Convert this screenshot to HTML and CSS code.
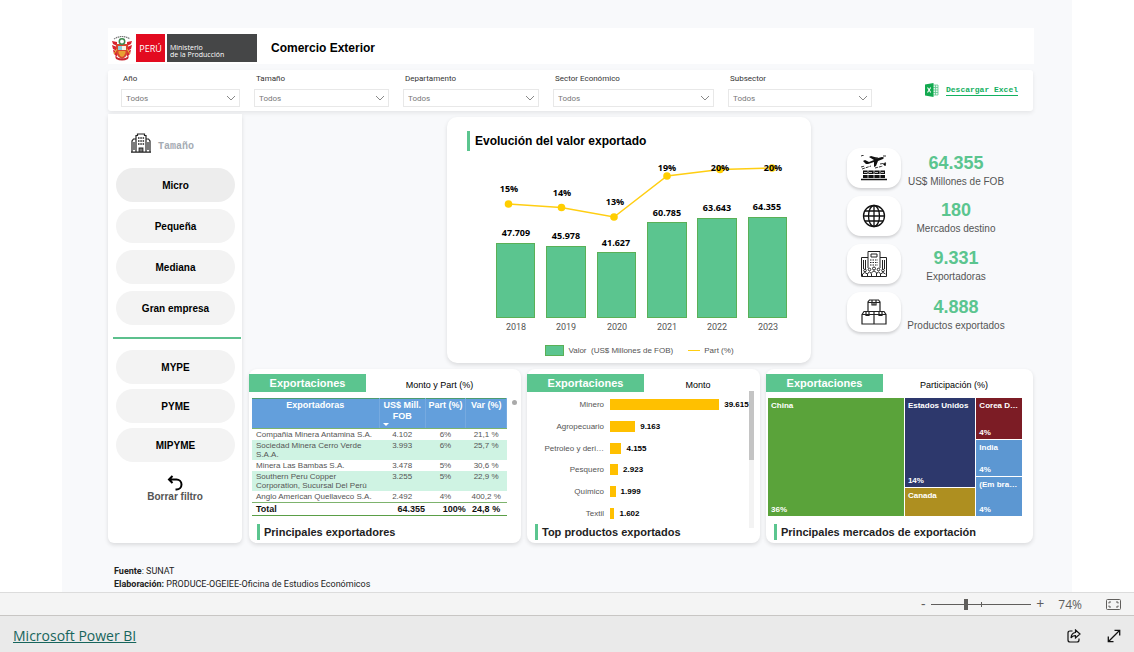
FILE: index.html
```html
<!DOCTYPE html>
<html lang="es">
<head>
<meta charset="utf-8">
<meta name="viewport" content="width=device-width, initial-scale=1">
<title>Comercio Exterior</title>
<link rel="stylesheet" href="styles.css">
</head>
<body>
<main class="report">
  <header class="topbar">
    <svg class="crest" viewBox="0 0 20 26" aria-hidden="true">
      <path d="M2 4Q10-1 18 4" fill="none" stroke="#777" stroke-width="1.2" stroke-dasharray="1.5 .6"/>
      <path d="M0 6l5 1v4l-4-2zM20 6l-5 1v4l4-2zM0 10l5 2v4l-4-2zM20 10l-5 2v4l4-2zM1 15l4 1v6l-3-3zM19 15l-4 1v6l3-3z" fill="#d8232f"/>
      <path d="M4 9h12v7q0 5-6 8-6-3-6-8z" fill="#d9452f"/>
      <path d="M6 11h4v4H6z" fill="#8fd0dc"/><path d="M10 11h4v4h-4z" fill="#f5f2e4"/>
      <path d="M6.500 16h7v2q-1 3-3.500 4-2.500-1-3.500-4z" fill="#e8a032"/>
      <circle cx="10" cy="6.500" r="2.700" fill="#fff" stroke="#3c8a4e" stroke-width="1.500"/>
      <path d="M3 21q7 5 14 0l-1 3q-6 3-12 0z" fill="#c9252f"/>
      <path d="M5 14l-3 5M15 14l3 5" stroke="#e9b52d"/>
    </svg>
    <div class="brand"><span class="brand-country">PERÚ</span><span class="brand-office">Ministerio<br>de la Producción</span></div>
    <h1>Comercio Exterior</h1>
  </header>

  <form class="filters">
    <div class="field"><label for="f1">Año</label><div class="pick"><select id="f1"><option>Todos</option></select><svg viewBox="0 0 10 6"><path d="M1 1l4 4 4-4"/></svg></div></div>
    <div class="field"><label for="f2">Tamaño</label><div class="pick"><select id="f2"><option>Todos</option></select><svg viewBox="0 0 10 6"><path d="M1 1l4 4 4-4"/></svg></div></div>
    <div class="field"><label for="f3">Departamento</label><div class="pick"><select id="f3"><option>Todos</option></select><svg viewBox="0 0 10 6"><path d="M1 1l4 4 4-4"/></svg></div></div>
    <div class="field"><label for="f4">Sector Económico</label><div class="pick"><select id="f4"><option>Todos</option></select><svg viewBox="0 0 10 6"><path d="M1 1l4 4 4-4"/></svg></div></div>
    <div class="field"><label for="f5">Subsector</label><div class="pick"><select id="f5"><option>Todos</option></select><svg viewBox="0 0 10 6"><path d="M1 1l4 4 4-4"/></svg></div></div>
    <a class="download" href="#excel">
      <svg viewBox="0 0 14 14" aria-hidden="true">
        <path d="M8 2h5v10H8" fill="#e8f6ee" stroke="#5fc78d" stroke-width=".8"/>
        <path d="M8 4.500h5M8 7h5M8 9.500h5M10.500 2v10" stroke="#5fc78d" stroke-width=".8"/>
        <path d="M0 1.500L8.500 0v14L0 12.500z" fill="#12a94f"/>
        <path d="M2.500 4.500l3.200 5M5.700 4.500l-3.200 5" stroke="#fff" stroke-width="1.100"/>
      </svg>
      <span>Descargar Excel</span>
    </a>
  </form>

  <div class="board">
    <aside class="sidebar">
      <div class="side-title">
        <svg viewBox="0 0 20 20" aria-hidden="true" fill="none" stroke="#222" stroke-width="1.200">
          <path d="M0 19.200h20M5 19V2.500h1.500V1h7v1.500H15V19M5 6H2.500L1 8v11M15 6h2.500L19 8v11M8.200 19v-4h3.600v4M10 15v4M3 9v8M17 9v8"/>
          <path d="M7 5h1.500M9.300 5h1.500M11.600 5h1.500M7 8h1.500M9.300 8h1.500M11.600 8h1.500M7 11h1.500M9.300 11h1.500M11.600 11h1.500" stroke-width="1.500"/>
        </svg>
        <span>Tamaño</span>
      </div>
      <div class="pills pills-size">
        <button class="pill pill-active" type="button">Micro</button>
        <button class="pill" type="button">Pequeña</button>
        <button class="pill" type="button">Mediana</button>
        <button class="pill" type="button">Gran empresa</button>
      </div>
      <hr class="rule">
      <div class="pills pills-group">
        <button class="pill" type="button">MYPE</button>
        <button class="pill" type="button">PYME</button>
        <button class="pill" type="button">MIPYME</button>
      </div>
      <button class="clear" type="button">
        <svg viewBox="0 0 16 16" aria-hidden="true" fill="none" stroke="#000" stroke-width="2"><path d="M5.500 1L2 4.500 5.500 8M2 4.500h7.500a5 5 0 0 1 0 10H8.500"/></svg>
        <span>Borrar filtro</span>
      </button>
    </aside>

    <div class="content">
      <div class="upper">
        <section class="card evolution">
          <h2 class="marked">Evolución del valor exportado</h2>
          <svg class="plot" viewBox="0 0 364 180" role="img" aria-label="Evolución del valor exportado">
            <g class="cols">
              <rect x="49.500" y="88.500" width="38" height="74"/><rect x="99.500" y="91.500" width="39" height="71"/>
              <rect x="150.500" y="97.500" width="38" height="65"/><rect x="200.500" y="67.500" width="39" height="95"/>
              <rect x="250.500" y="63.500" width="39" height="99"/><rect x="301.500" y="62.500" width="38" height="100"/>
            </g>
            <path class="trend" d="M61.500 49L114 52.500 167 62 220 21 273 14.500 326 13"/>
            <g class="dots"><circle cx="61.500" cy="49" r="3.800"/><circle cx="114.500" cy="52.500" r="3.800"/><circle cx="167" cy="62" r="3.800"/><circle cx="220" cy="21" r="3.800"/><circle cx="273" cy="14.500" r="3.800"/><circle cx="325" cy="13" r="3.800"/></g>
            <g class="vals">
              <text x="62" y="37">15%</text><text x="115" y="41">14%</text><text x="168" y="50">13%</text><text x="220" y="16">19%</text><text x="273" y="16">20%</text><text x="326" y="16">20%</text>
              <text x="69" y="81">47.709</text><text x="119" y="84">45.978</text><text x="169" y="91">41.627</text><text x="220" y="61">60.785</text><text x="270" y="56">63.643</text><text x="320" y="55">64.355</text>
            </g>
            <g class="years"><text x="69" y="175">2018</text><text x="119" y="175">2019</text><text x="170" y="175">2020</text><text x="220" y="175">2021</text><text x="270" y="175">2022</text><text x="321" y="175">2023</text></g>
          </svg>
          <div class="legend"><span class="key key-bar">Valor &nbsp;(US$ Millones de FOB)</span><span class="key key-line">Part (%)</span></div>
        </section>

        <div class="kpis">
          <div class="kpi kpi-low">
            <div class="tile"><svg viewBox="0 0 26 26" aria-hidden="true">
              <path d="M2 6l2-1 4 2 5-2-5-3 2-1 7 2 4-1q3 0 1 2l-5 2-2 5-2 1V7l-6 2H5z" fill="#111"/>
              <path d="M0 12l4-1M14 3h3M19 9l6-1M0 1l3-1M22 1h3M1 14l9-3M14 13l8-2M22 9l3-1-1 3" stroke="#333" stroke-width="1" stroke-dasharray="3 1"/>
              <path d="M2 15.500h22v3.500H2zM2 20h22v3H2z" fill="#111"/>
              <path d="M3 17.500h3M8 17.500h3M14 17.500h3M20 17.500h3M7 15v9M13 15v9M19 15v9" stroke="#fff" stroke-width=".7"/>
              <path d="M0 24.500h26" stroke="#111" stroke-width="1.500"/>
            </svg></div>
            <div class="figure"><strong>64.355</strong><span>US$ Millones de FOB</span></div>
          </div>
          <div class="kpi">
            <div class="tile"><svg viewBox="0 0 26 26" aria-hidden="true" fill="none" stroke="#111" stroke-width="1.300">
              <circle cx="13" cy="13" r="10.500"/><ellipse cx="13" cy="13" rx="5.500" ry="10.500"/><path d="M13 2.500v21M2.500 13h21M4 8h18M4 18h18"/>
            </svg></div>
            <div class="figure"><strong>180</strong><span>Mercados destino</span></div>
          </div>
          <div class="kpi">
            <div class="tile"><svg viewBox="0 0 26 26" aria-hidden="true" fill="none" stroke="#222" stroke-width="1">
              <path d="M7 17V.5h12V17M7 6.500H.5v19h25v-19H19M10 3h6v3h-6zM2.500 9v9M4.500 9v9M21.500 9v9M23.500 9v9"/>
              <path d="M9 9h8M9 11.500h8M9 14h8" stroke-dasharray="1.500 1"/>
              <circle cx="4" cy="19.500" r="1.300"/><circle cx="8.500" cy="18.500" r="1.300"/><circle cx="13" cy="17.500" r="1.500"/><circle cx="17.500" cy="18.500" r="1.300"/><circle cx="22" cy="19.500" r="1.300"/>
              <path d="M1.500 25v-2q2-3 5 0v2M6.500 23q2-4 4 0v2M10.500 22q2.500-4 5 0v3M15.500 23q2-4 4 0v2M19.500 23q2.500-3 5 0"/>
            </svg></div>
            <div class="figure"><strong>9.331</strong><span>Exportadoras</span></div>
          </div>
          <div class="kpi kpi-low">
            <div class="tile"><svg viewBox="0 0 26 26" aria-hidden="true" fill="none" stroke="#222" stroke-width="1.200">
              <path d="M7 13V3l1.500-2h9L19 3v10M7 3.500h12M11 1v5h4V1M13 3v3M1 15.500L3 12.500h20l2 3V25H1zM1 15.500h24M13 13v12M5 12.500v4h3v-4M18 12.500v4h3v-4"/>
            </svg></div>
            <div class="figure"><strong>4.888</strong><span>Productos exportados</span></div>
          </div>
        </div>
      </div>

      <div class="lower">
        <section class="card panel">
          <div class="panel-head"><span class="tab">Exportaciones</span><span class="sub">Monto y Part (%)</span></div>
          <div class="panel-body table-body">
            <table>
              <colgroup><col class="c-name"><col class="c-amount"><col class="c-part"><col class="c-var"></colgroup>
              <thead><tr><th>Exportadoras</th><th>US$ Mill. FOB<i class="sort"></i></th><th>Part (%)</th><th>Var (%)</th></tr></thead>
              <tbody>
                <tr><td>Compañia Minera Antamina S.A.</td><td>4.102</td><td>6%</td><td>21,1 %</td></tr>
                <tr><td>Sociedad Minera Cerro Verde S.A.A.</td><td>3.993</td><td>6%</td><td>25,7 %</td></tr>
                <tr><td>Minera Las Bambas S.A.</td><td>3.478</td><td>5%</td><td>30,6 %</td></tr>
                <tr><td>Southern Peru Copper Corporation, Sucursal Del Perú</td><td>3.255</td><td>5%</td><td>22,9 %</td></tr>
                <tr><td>Anglo American Quellaveco S.A.</td><td>2.492</td><td>4%</td><td>400,2 %</td></tr>
              </tbody>
              <tfoot><tr><td>Total</td><td>64.355</td><td>100%</td><td>24,8 %</td></tr></tfoot>
            </table>
            <i class="scroll-dot"></i>
          </div>
          <h2 class="marked">Principales exportadores</h2>
        </section>

        <section class="card panel">
          <div class="panel-head"><span class="tab">Exportaciones</span><span class="sub">Monto</span></div>
          <div class="panel-body bars">
            <div class="bar-row"><span>Minero</span><div><i style="width:78%"></i><b>39.615</b></div></div>
            <div class="bar-row"><span>Agropecuario</span><div><i style="width:18%"></i><b>9.163</b></div></div>
            <div class="bar-row"><span>Petroleo y deri…</span><div><i style="width:8.2%"></i><b>4.155</b></div></div>
            <div class="bar-row"><span>Pesquero</span><div><i style="width:5.8%"></i><b>2.923</b></div></div>
            <div class="bar-row"><span>Químico</span><div><i style="width:4%"></i><b>1.999</b></div></div>
            <div class="bar-row"><span>Textil</span><div><i style="width:3.2%"></i><b>1.602</b></div></div>
          </div>
          <div class="scrollbar"><i></i></div>
          <h2 class="marked">Top productos exportados</h2>
        </section>

        <section class="card panel">
          <div class="panel-head"><span class="tab">Exportaciones</span><span class="sub">Participación (%)</span></div>
          <div class="panel-body treemap">
            <div class="node china"><b>China</b><span>36%</span></div>
            <div class="node usa"><b>Estados Unidos</b><span>14%</span></div>
            <div class="node canada"><b>Canada</b></div>
            <div class="node korea"><b>Corea D…</b><span>4%</span></div>
            <div class="node india"><b>India</b><span>4%</span></div>
            <div class="node blank"><b>(Em bra…</b><span>4%</span></div>
          </div>
          <h2 class="marked">Principales mercados de exportación</h2>
        </section>
      </div>
    </div>
  </div>

  <p class="source"><b>Fuente</b>: SUNAT<br><b>Elaboración:</b> PRODUCE-OGEIEE-Oficina de Estudios Económicos</p>
</main>

<div class="zoombar">
  <button class="step" type="button" aria-label="Alejar">-</button>
  <div class="slider"><input type="range" min="0" max="100" value="34" aria-label="Zoom"></div>
  <button class="step" type="button" aria-label="Acercar">+</button>
  <span class="percent">74%</span>
  <button class="icon-btn" type="button" aria-label="Ajustar a la página"><svg viewBox="0 0 15 11" width="15" height="11" fill="none" stroke="#605e5c"><rect x=".5" y=".5" width="14" height="10" rx="1"/><path d="M3 4.500V3h2M10 3h2v1.500M12 6.500V8h-2M5 8H3V6.500"/></svg></button>
</div>
<footer class="footer">
  <a href="#powerbi">Microsoft Power BI</a>
  <div class="actions">
    <button class="icon-btn" type="button" aria-label="Compartir"><svg viewBox="0 0 14 14" width="14" height="14" fill="none" stroke="#111" stroke-width="1.200"><path d="M5.500 2H3Q1 2 1 4v7q0 2 2 2h7q2 0 2-2V9.500"/><path d="M8.500 1l4.500 4-4.500 4V6.700Q5.500 6.500 4 9q.3-5 4.500-5.500z"/></svg></button>
    <button class="icon-btn" type="button" aria-label="Pantalla completa"><svg viewBox="0 0 14 14" width="14" height="14" fill="none" stroke="#111" stroke-width="1.300"><path d="M1.500 12.500l11-11M7.500 1.300h5.200v5.200M1.300 7.500v5.200h5.200"/></svg></button>
  </div>
</footer>
</body>
</html>
```
FILE: styles.css
```css
* { box-sizing: border-box; }
body {
  margin: 0;
  min-height: 100vh;
  display: flex;
  flex-direction: column;
  background: #fff;
  color: #000;
  font-family: "Liberation Sans", Arial, sans-serif;
  font-size: 10px;
}
button { border: 0; padding: 0; background: none; font: inherit; color: inherit; cursor: pointer; }
h1, h2, p { margin: 0; }

.report {
  flex: 1;
  margin: 0 62px;
  padding: 28px 38px 0 46px;
  background: #f8f9fb;
}
.topbar {
  display: flex;
  align-items: center;
  height: 36px;
  padding: 0 4px;
  background: #fff;
}
.topbar h1 { margin-left: 14px; padding-top: 3px; font-size: 12px; line-height: 16px; }
.crest { width: 20px; height: 26px; margin: 4px 4px 0 0; }
.brand { display: flex; gap: 2px; height: 28px; margin-top: 4px; color: #fff; font-family: "Open Sans", sans-serif; }
.brand-country { display: flex; align-items: center; justify-content: center; width: 29px; background: #e30b20; font-size: 9px; }
.brand-office {
  display: flex;
  flex-direction: column;
  justify-content: center;
  width: 90px;
  padding: 6px 3px 0;
  background: #454647;
  font-size: 7px;
  line-height: 7px;
}

.filters {
  display: grid;
  grid-template-columns: 119fr 135fr 136fr 161fr 144fr 147fr;
  gap: 14px;
  margin-top: 6px;
  margin-right: 1px;
  padding: 3px 0 4px 13px;
  background: #fff;
  border-radius: 3px;
  box-shadow: 0 2px 4px rgba(0, 0, 0, .08);
  color: #444;
  font-family: Roboto, sans-serif;
  font-size: 8px;
}
.field label { display: block; padding: 0 2px; line-height: 12px; margin-bottom: 4px; color: #333; }
.pick { display: grid; align-items: center; }
.pick > * { grid-area: 1 / 1; }
.pick select {
  appearance: none;
  width: 100%;
  height: 18px;
  padding: 0 4px;
  border: 1px solid #e8e8e8;
  border-radius: 0;
  background: #fff;
  color: #777;
  font: inherit;
}
.pick svg { justify-self: end; width: 10px; height: 6px; margin-right: 4px; fill: none; stroke: #888; pointer-events: none; }
.download {
  display: flex;
  align-items: center;
  justify-self: end;
  gap: 7px;
  margin-right: 15px;
  color: #12b060;
  font: bold 8px/10px "Liberation Mono", "Courier New", monospace;
  text-decoration: none;
  white-space: nowrap;
}
.download svg { width: 14px; height: 14px; }
.download span { border-bottom: 1px solid #12b060; }

.board { display: grid; grid-template-columns: 134px minmax(0, 1fr); gap: 7px; margin-top: 3px; margin-right: 1px; }
.card, .sidebar { background: #fff; box-shadow: 0 2px 4px rgba(0, 0, 0, .12); }
.sidebar { padding: 18px 1px 0 5px; border-radius: 0 0 6px 6px; }
.side-title { display: flex; align-items: flex-end; gap: 7px; height: 22px; padding-left: 18px; color: #a5abb3; font: bold 10px/14px "Liberation Mono", "Courier New", monospace; }
.side-title svg { width: 20px; height: 20px; margin-bottom: 1px; }
.pills { display: flex; flex-direction: column; padding: 0 6px 0 3px; }
.pills-size { gap: 7px; margin-top: 14px; }
.pills-group { gap: 5px; }
.pill { height: 34px; border-radius: 17px; background: #f3f3f3; font-size: 10px; font-weight: bold; }
.pill-active { background: #ededed; }
.rule { height: 2px; margin: 12px 0 11px; border: 0; background: #5cc08d; }
.clear { display: flex; flex-direction: column; align-items: center; width: 120px; margin: 13px 0 0 2px; color: #555; font-weight: bold; line-height: 12px; }
.clear svg { width: 16px; height: 16px; }

.content { padding-top: 3px; }
.upper { display: grid; grid-template-columns: 198fr 364fr 222fr; }
.evolution { grid-column: 2; padding: 14px 0 7px; border-radius: 10px; }
.marked { border-left: 3px solid #5bc58f; }
.evolution .marked { margin-left: 20px; padding-left: 5px; font-size: 12px; line-height: 20px; }
.plot { display: block; width: 100%; margin-top: 4px; text-anchor: middle; }
.cols rect { fill: #5bc58f; stroke: #5ab056; }
.trend { fill: none; stroke: #ffce12; stroke-width: 1.500; }
.dots { fill: #ffce00; }
.vals { font: bold 9px "Open Sans", sans-serif; }
.years { font: 9px Roboto, sans-serif; fill: #555; }
.legend { display: flex; justify-content: center; gap: 15px; margin-top: 10px; padding-left: 21px; color: #555; font-size: 8px; line-height: 10px; }
.key { display: flex; align-items: center; gap: 4px; }
.key-bar::before { content: ""; width: 17px; height: 9px; border: 1px solid #5ab056; background: #5bc58f; }
.key-line::before { content: ""; width: 12px; height: 1px; background: #ffce12; }

.kpis { display: flex; flex-direction: column; gap: 8px; padding: 31px 0 0 36px; }
.kpi { display: flex; align-items: center; gap: 4px; height: 40px; }
.kpi-low { align-items: flex-end; }
.tile { display: grid; place-items: center; width: 54px; height: 40px; border-radius: 14px; background: #fff; box-shadow: 0 2px 3px rgba(0, 0, 0, .16); }
.tile svg { width: 26px; height: 26px; }
.figure { display: flex; flex-direction: column; align-items: center; width: 102px; color: #555; line-height: 13px; white-space: nowrap; }
.figure strong { color: #5bc58f; font-size: 18px; line-height: 24px; }

.lower { display: grid; grid-template-columns: 272fr 233fr 267fr; gap: 6px; margin-top: 6px; }
.panel { position: relative; display: flex; flex-direction: column; min-width: 0; min-height: 173px; padding-top: 5px; border-radius: 8px; }
.panel-head { display: grid; grid-template-columns: 117px 1fr; align-items: center; }
.tab { height: 18px; background: #5bc58f; color: #fff; font-size: 11px; font-weight: bold; line-height: 18px; text-align: center; }
.sub { padding: 4px 8px 0 0; font-size: 9px; line-height: 14px; text-align: center; }
.panel-body { flex: 1; margin-top: 6px; }
.panel .marked { margin: 8px 0 3px 8px; padding-left: 4px; font-size: 11px; line-height: 16px; color: #222; }

.table-body { display: flex; align-items: flex-start; gap: 5px; padding: 0 4px 0 3px; }
table { flex: 1; border-collapse: collapse; table-layout: fixed; color: #555; font-size: 8px; line-height: 9px; border-bottom: 1px solid #5a9e46; }
.c-name { width: 50%; }
.c-amount { width: 18%; }
.c-part { width: 16%; }
.c-var { width: 16%; }
th { position: relative; height: 30px; padding: 1px 0 0; border-top: 1px solid #4c9b72; border-bottom: 1px solid #7db36d; border-right: 1px solid #76aae0; background: #639fdc; color: #fff; font-size: 9px; line-height: 11px; vertical-align: top; }
.sort { position: absolute; left: 3px; bottom: 2px; border: 3px solid transparent; border-top-color: #fff; border-bottom: 0; }
td { padding: 1px 0; vertical-align: top; text-align: center; white-space: nowrap; }
td:first-child { padding-left: 4px; text-align: left; white-space: normal; }
tbody tr:nth-child(even) { background: #cff3e3; }
tfoot td { border-top: 1px solid #7db36d; color: #111; font-size: 9px; font-weight: bold; line-height: 10px; }
tfoot td:nth-child(2), tfoot td:nth-child(3) { text-align: right; }
.scroll-dot { width: 5px; height: 5px; margin-top: 2px; border-radius: 50%; background: #aaa; }

.bars { display: flex; flex-direction: column; justify-content: space-between; padding: 0 10px 0 0; }
.panel-body.bars { margin: 7px 0 0; }
.bar-row { display: grid; grid-template-columns: 77px minmax(0, 1fr); gap: 6px; align-items: center; height: 11px; color: #555; font-size: 8px; }
.bar-row > span { text-align: right; white-space: nowrap; }
.bar-row > div { display: flex; align-items: center; gap: 5px; }
.bar-row i { height: 11px; background: #ffc000; }
.bar-row b { color: #000; }
.scrollbar { position: absolute; top: 22px; right: 6px; width: 5px; height: 137px; background: #f3f3f3; }
.scrollbar i { display: block; height: 50%; background: #c4c4c4; }
.panel .bars ~ .marked { margin-top: 5px; }

.treemap { display: grid; grid-template-columns: 137fr 71fr 46fr; grid-template-rows: 41fr 36fr 10fr 28fr; gap: 1px; margin-left: 2px; margin-right: 11px; }
.node { display: flex; flex-direction: column; justify-content: space-between; min-width: 0; padding: 3px 0 1px 3px; color: #fff; font-size: 8px; font-weight: bold; line-height: 10px; white-space: nowrap; overflow: hidden; }
.china { grid-area: 1 / 1 / 5 / 2; background: #5aa33a; }
.usa { grid-area: 1 / 2 / 4 / 3; background: #2d386c; }
.canada { grid-area: 4 / 2 / 5 / 3; background: #ae8f20; }
.korea { grid-area: 1 / 3 / 2 / 4; background: #7c1c25; }
.india { grid-area: 2 / 3 / 3 / 4; background: #5c97d2; }
.blank { grid-area: 3 / 3 / 5 / 4; background: #5c97d2; }

.source { margin: 22px 0 0 6px; color: #222; font: 9px/13px Roboto, sans-serif; }

.zoombar { display: flex; align-items: center; justify-content: flex-end; height: 24px; padding-right: 13px; border-top: 1px solid #dcdcdc; border-bottom: 1px solid #c8c6c4; background: #f4f4f4; color: #605e5c; font: 12px "Open Sans", sans-serif; }
.step { width: 10px; font-size: 14px; line-height: 14px; text-align: center; }
.slider { display: grid; align-items: center; width: 100px; margin: 0 4px 0 3px; background: linear-gradient(#605e5c, #605e5c) 50px center / 1px 5px no-repeat; }
.slider input { appearance: none; width: 100%; height: 12px; margin: 0; background: linear-gradient(#605e5c, #605e5c) center / 100% 1px no-repeat; }
.slider input::-webkit-slider-thumb { appearance: none; width: 4px; height: 11px; background: #605e5c; }
.slider input::-moz-range-thumb { width: 4px; height: 11px; border: 0; border-radius: 0; background: #605e5c; }
.percent { margin: 0 24px 0 13px; }
.icon-btn { display: flex; }
.footer { display: flex; align-items: center; justify-content: space-between; height: 36px; padding: 4px 13px 0; background: #eaeaea; }
.footer a { color: #17655c; font: 14px/18px "Open Sans", sans-serif; }
.actions { display: flex; gap: 26px; }
```
